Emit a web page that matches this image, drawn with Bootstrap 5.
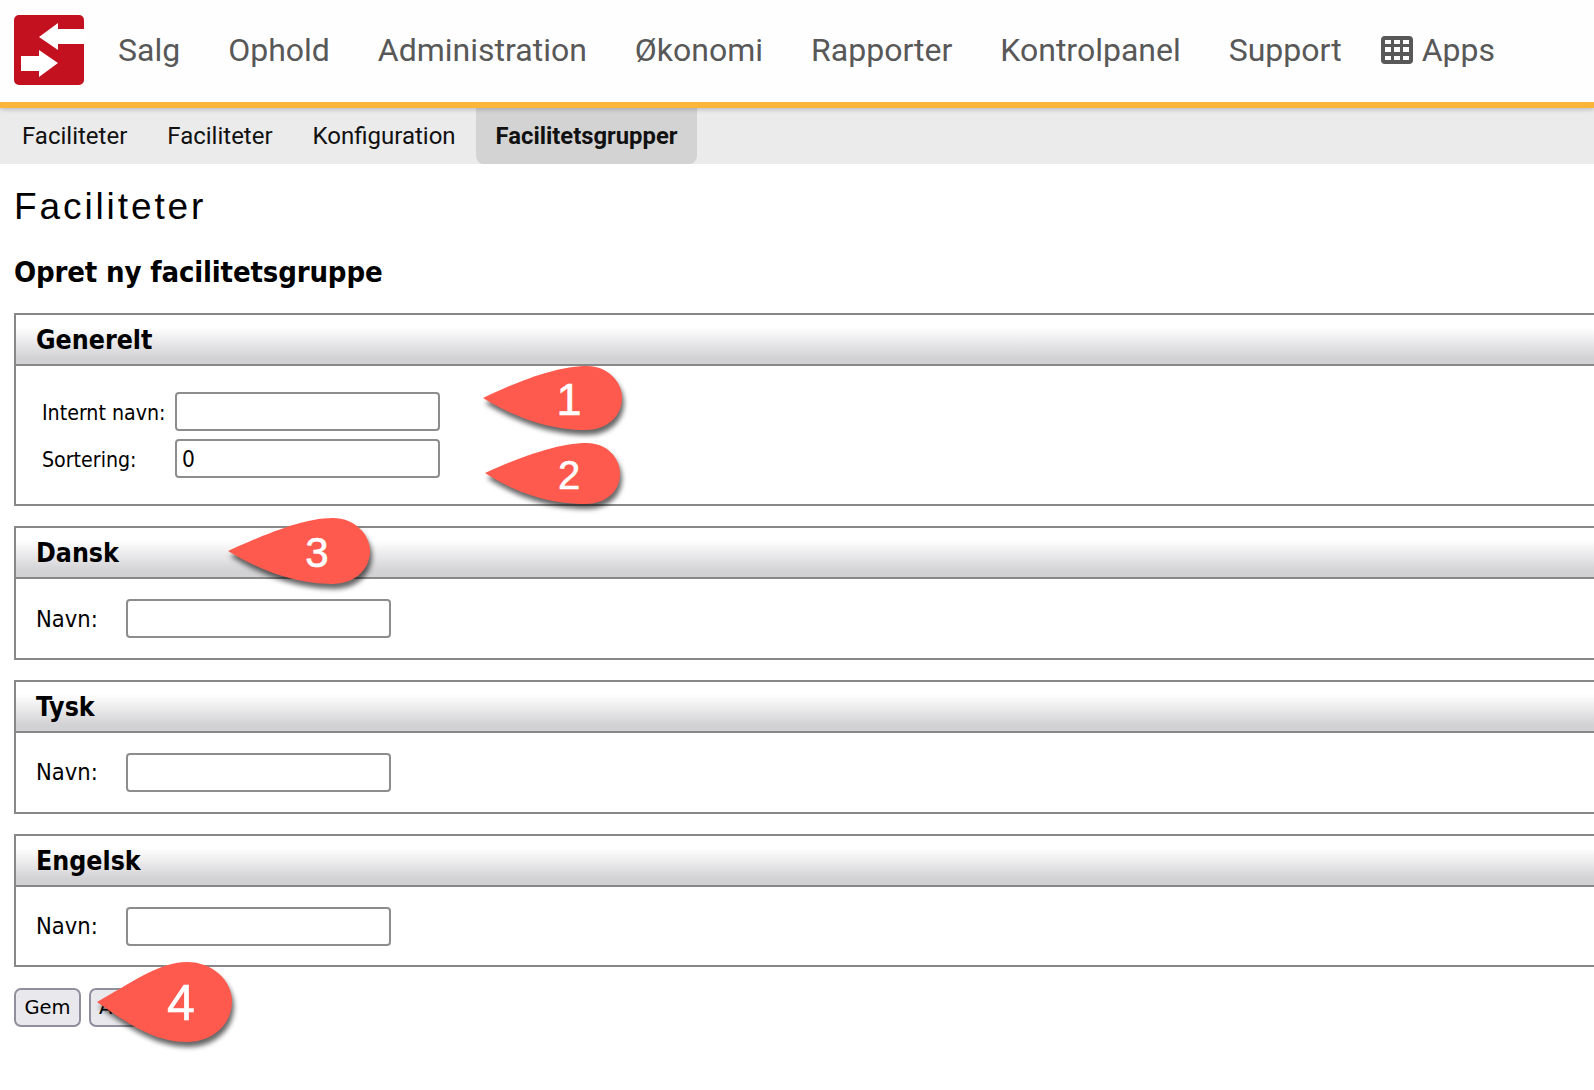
<!DOCTYPE html>
<html lang="da">
<head>
<meta charset="utf-8">
<title>Faciliteter</title>
<link href="https://cdn.jsdelivr.net/npm/bootstrap@5.3.0/dist/css/bootstrap.min.css" rel="stylesheet">
<style>
html,body{overflow:hidden;height:1090px;background:#fff}
body{position:relative;font-family:"DejaVu Sans","Liberation Sans",sans-serif;font-stretch:condensed;color:#000}
.top-bar{height:108px;background:#fefefe;border-bottom:6px solid #fbb53a;box-shadow:0 2px 4px rgba(0,0,0,.18);padding:15px 0 0 14px;position:relative;align-items:flex-start;gap:34px;flex-wrap:nowrap}
.top-bar svg.logo{width:70px;height:70px;flex:none}
.top-menu{gap:48px;flex-wrap:nowrap;margin-top:12px}
.top-menu .nav-link{padding:0;font:400 32px/46px Roboto,sans-serif;color:#585858;white-space:nowrap}
.top-menu .apps-link{margin-left:-8px}
.top-menu .nav-link svg{width:32px;height:28px;margin:-6px 9px 0 -1px;vertical-align:middle}
.sub-bar{height:56px;background:#ebebeb;flex-wrap:nowrap}
.sub-bar .nav-link{padding:0 20px;font:400 24px/57px Roboto,sans-serif;color:#111;height:56px}
.sub-bar .nav-link:first-child{padding-left:22px}
.sub-bar .nav-link.active{background:#d3d3d3;font-weight:700;font-size:23.800px;border-radius:0 0 8px 8px;color:#111}
.page-body{padding:21px 0 0 14px}
.page-title{font:400 37px/44px "Liberation Sans",sans-serif;letter-spacing:2.900px;margin:0 0 23px}
.page-sub{font:700 29px/40px "DejaVu Sans",sans-serif;font-stretch:condensed;letter-spacing:-.15px;margin:0 0 21px}
.panel-box{width:1640px;border:2px solid #888;margin-bottom:20px;height:133.700px}
.panel-tall{height:193px;margin-bottom:20.300px}
.panel-head{height:51px;border-bottom:2px solid #888;background:linear-gradient(#fff 25%,#d2d2d5 88%);font:700 26.500px/50px "DejaVu Sans",sans-serif;font-stretch:condensed;padding-left:20px}
.panel-row{display:flex;align-items:center;height:39px}
.panel-tall .panel-row{font-size:21.200px}
.panel-short .panel-row{font-size:23.500px}
.panel-tall .panel-body{padding:26px 0 0 26px}
.panel-short .panel-body{padding:20px 0 0 20px}
.panel-tall .panel-row+.panel-row{margin-top:8px}
.panel-tall .row-label{width:133px;padding-top:3px}
.panel-short .row-label{width:90px;padding-top:1px}
.plain-input{width:265px;height:39px;border:2px solid #8d8d8d;border-radius:4px;padding:0 5px;font:22.500px "DejaVu Sans",sans-serif;font-stretch:condensed;color:#000;background:#fff}
.btn-row{padding-top:1px;gap:8px}
.act-btn{height:39px;min-width:67px;border:2px solid #8f8f9d;border-radius:7px;background:#e9e9ed;padding:0 8px;font-size:19.500px;line-height:1;color:#000}
.pin-layer{position:absolute;left:0;top:0;width:1594px;height:1090px;pointer-events:none}
.pin{fill:#ff5a4d;filter:drop-shadow(2px 5px 2.500px rgba(0,0,0,.6))}
.pin-num{fill:#fff;stroke:#fff;stroke-width:.6px;font-family:"Liberation Sans",sans-serif;text-anchor:middle}
</style>
</head>
<body>
<nav class="top-bar d-flex">
  <svg class="logo" viewBox="0 0 70 70"><rect width="70" height="70" rx="5" fill="#c4111f"/><path fill="#fff" d="M25 22 44 8V14H70V29H44V35ZM7 41H25V35L44 48 25 62V56H7Z"/></svg>
  <div class="nav top-menu">
    <a class="nav-link" href="#">Salg</a>
    <a class="nav-link" href="#">Ophold</a>
    <a class="nav-link" href="#">Administration</a>
    <a class="nav-link" href="#">Økonomi</a>
    <a class="nav-link" href="#">Rapporter</a>
    <a class="nav-link" href="#">Kontrolpanel</a>
    <a class="nav-link" href="#">Support</a>
    <a class="nav-link apps-link" href="#"><svg viewBox="0 0 32 28"><rect width="32" height="28" rx="4" fill="#585858"/><g fill="#fff"><rect x="4" y="4" width="6" height="4"/><rect x="13" y="4" width="6" height="4"/><rect x="22" y="4" width="6" height="4"/><rect x="4" y="11" width="6" height="5"/><rect x="13" y="11" width="6" height="5"/><rect x="22" y="11" width="6" height="5"/><rect x="4" y="20" width="6" height="4"/><rect x="13" y="20" width="6" height="4"/><rect x="22" y="20" width="6" height="4"/></g></svg>Apps</a>
  </div>
</nav>
<div class="nav sub-bar">
  <a class="nav-link" href="#">Faciliteter</a>
  <a class="nav-link" href="#">Faciliteter</a>
  <a class="nav-link" href="#">Konfiguration</a>
  <a class="nav-link active" href="#">Facilitetsgrupper</a>
</div>
<main class="page-body">
  <h1 class="page-title">Faciliteter</h1>
  <h2 class="page-sub">Opret ny facilitetsgruppe</h2>
  <section class="panel-box panel-tall">
    <div class="panel-head">Generelt</div>
    <div class="panel-body">
      <div class="panel-row"><span class="row-label">Internt navn:</span><input class="plain-input" type="text"></div>
      <div class="panel-row"><span class="row-label">Sortering:</span><input class="plain-input" type="text" value="0"></div>
    </div>
  </section>
  <section class="panel-box panel-short">
    <div class="panel-head">Dansk</div>
    <div class="panel-body"><div class="panel-row"><span class="row-label">Navn:</span><input class="plain-input" type="text"></div></div>
  </section>
  <section class="panel-box panel-short">
    <div class="panel-head">Tysk</div>
    <div class="panel-body"><div class="panel-row"><span class="row-label">Navn:</span><input class="plain-input" type="text"></div></div>
  </section>
  <section class="panel-box panel-short">
    <div class="panel-head">Engelsk</div>
    <div class="panel-body"><div class="panel-row"><span class="row-label">Navn:</span><input class="plain-input" type="text"></div></div>
  </section>
  <div class="d-flex btn-row">
    <button class="act-btn" type="button">Gem</button>
    <button class="act-btn" type="button">Annuller</button>
  </div>
</main>
<svg class="pin-layer" viewBox="0 0 1594 1090">
  <path class="pin" d="M483 398C525 378 560 366 587 366C607 366 622 381 622 398C622 417 606 430 585 430C557 430 522 422 483 398Z"/>
  <text class="pin-num" x="569" y="415" font-size="45">1</text>
  <path class="pin" d="M485 473C525 455 560 443 587 443C606 443 620 457 620 474C620 492 605 504 585 504C557 504 522 497 485 473Z"/>
  <text class="pin-num" x="569" y="489" font-size="40">2</text>
  <path class="pin" d="M228 551C270 532 305 518 333 518C354 518 370 534 370 551C370 570 354 584 332 584C303 584 267 575 228 551Z"/>
  <text class="pin-num" x="317" y="567" font-size="42">3</text>
  <path class="pin" d="M97 1002C130 984 158 962 187 962C213 962 232 981 232 1001C232 1025 212 1042 187 1042C155 1042 128 1024 97 1002Z"/>
  <text class="pin-num" x="181" y="1020" font-size="50">4</text>
</svg>
<script src="https://cdn.jsdelivr.net/npm/bootstrap@5.3.0/dist/js/bootstrap.bundle.min.js"></script>
</body>
</html>
